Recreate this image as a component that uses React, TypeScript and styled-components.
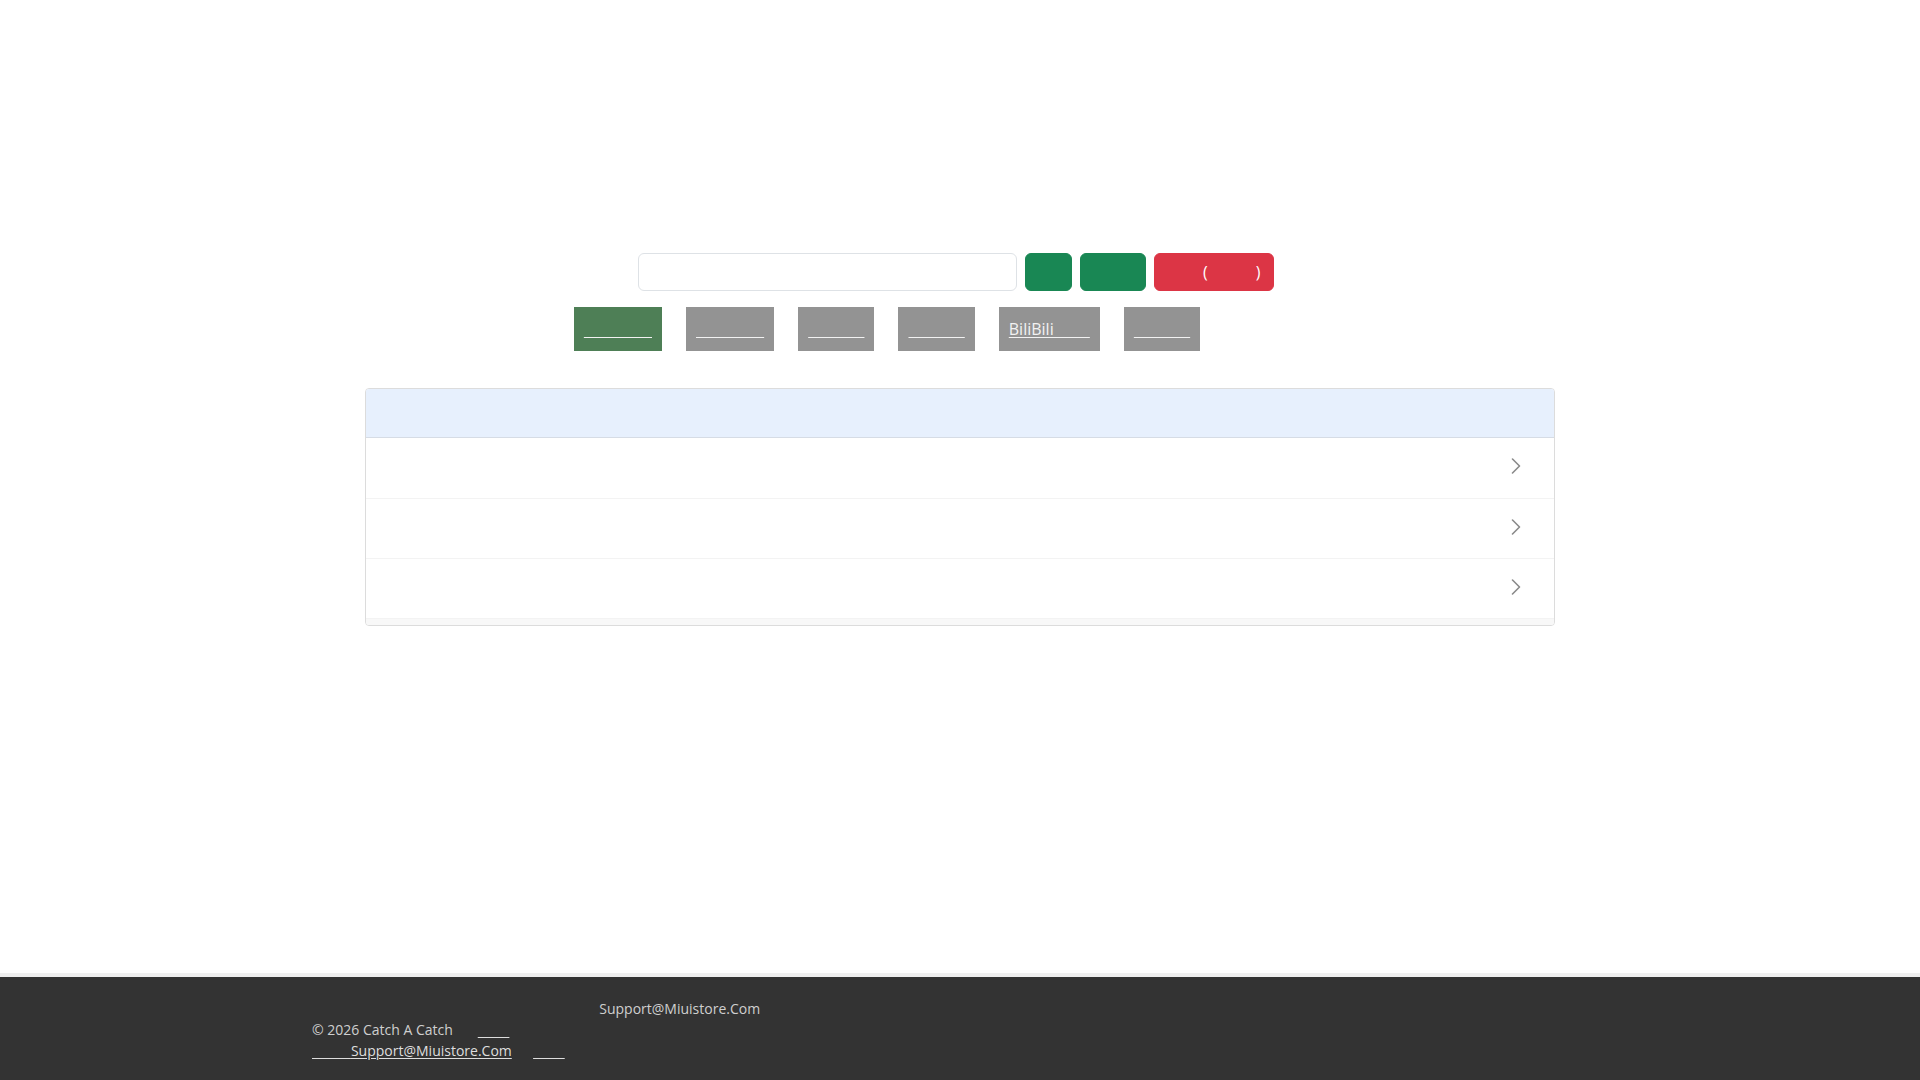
import React from 'react';
import styled, { createGlobalStyle } from 'styled-components';

const GlobalStyle = createGlobalStyle`
  html, body { margin: 0; padding: 0; }
  * { box-sizing: border-box; }
  body {
    font-family: "Open Sans", "Noto Sans CJK SC", sans-serif;
    font-size: 16px;
    line-height: 1.5;
    color: #212529;
    background: #ffffff;
  }
`;

/* The original labels are CJK text that rendered without glyphs: keep their advance as spaces */
const blank = (px: number, fs: number): string => {
  const em = Math.floor(px / fs);
  const rest = px - em * fs;
  const sp = Math.round(rest / (fs * 0.26));
  return '\u2003'.repeat(em) + ' '.repeat(sp);
};

const Page = styled.div`
  min-height: 100vh;
  display: flex;
  flex-direction: column;
`;

const Main = styled.main`
  flex: 1;
  padding-top: 253px;
  padding-bottom: 40px;
`;

const SearchRow = styled.form`
  display: flex;
  justify-content: center;
  gap: 8px;
  padding-right: 8px;
  margin: 0;
`;

const SearchInput = styled.input`
  width: 379px;
  height: 38px;
  border: 1px solid #dee2e6;
  border-radius: 6px;
  padding: 6px 12px;
  font-family: inherit;
  font-size: 16px;
  outline: none;
`;

const ActionButton = styled.button<{ $variant: 'success' | 'danger' }>`
  height: 38px;
  padding: 6px 12px;
  border-radius: 6px;
  border: 1px solid ${(p) => (p.$variant === 'success' ? '#198754' : '#dc3545')};
  background: ${(p) => (p.$variant === 'success' ? '#198754' : '#dc3545')};
  color: #ffffff;
  font-family: inherit;
  font-size: 16px;
  line-height: 24px;
  white-space: pre;
  cursor: pointer;
`;

const TabRow = styled.nav`
  display: flex;
  justify-content: center;
  gap: 24px;
  margin-top: 16px;
  padding-right: 146px;
`;

const Tab = styled.a<{ $active?: boolean }>`
  display: block;
  padding: 10px 10px;
  background: ${(p) => (p.$active ? '#4e7f56' : '#939393')};
  color: #f2f2f2;
  font-size: 16px;
  line-height: 24px;
  text-decoration: underline;
  text-underline-offset: 2px;
  white-space: pre;
  cursor: pointer;
`;

const Panel = styled.section`
  width: 1190px;
  margin: 37px auto 0;
  border: 1px solid #dcdcdc;
  border-radius: 4px;
  overflow: hidden;
  background: #ffffff;
`;

const PanelHeader = styled.header`
  height: 49px;
  background: #e7f0fd;
  border-bottom: 1px solid #d6dce5;
`;

const Row = styled.div`
  height: 60px;
  display: flex;
  align-items: center;
  justify-content: flex-end;
  padding: 0 33px 4px 0;
  border-bottom: 1px solid #f3f3f3;

  &:first-of-type {
    height: 61px;
    padding-bottom: 5px;
  }
`;

const PanelFoot = styled.footer`
  height: 6px;
  background: #f8f8f8;
`;

const Chevron = () => (
  <svg width="10" height="16" viewBox="0 0 10 16" fill="none">
    <path d="M1.5 1 L8.5 8 L1.5 15" stroke="#8a8a8a" strokeWidth="1.6" strokeLinecap="round" strokeLinejoin="round" />
  </svg>
);

const Footer = styled.footer`
  border-top: 4px solid #efefef;
  background: #333333;
  color: #cfcfcf;
  font-size: 14px;
  line-height: 21px;
  padding: 21px 0 19px;
`;

const FooterInner = styled.div`
  max-width: 1320px;
  margin: 0 auto;
  padding: 0 12px;
`;

const FooterLine = styled.div`
  white-space: pre;
`;

const FooterLink = styled.a`
  color: #dedede;
  text-decoration: underline;
  text-underline-offset: 2px;
`;

const tabs: { label: string; active?: boolean }[] = [
  { label: blank(67, 16), active: true },
  { label: blank(67, 16) },
  { label: blank(58, 16) },
  { label: blank(58, 16) },
  { label: 'BiliBili' + blank(38, 16) },
  { label: blank(58, 16) },
];

export default function App() {
  return (
    <>
      <GlobalStyle />
      <Page>
        <Main>
          <SearchRow onSubmit={(e) => e.preventDefault()}>
            <SearchInput type="text" />
            <ActionButton $variant="success" type="submit">{blank(19, 16)}</ActionButton>
            <ActionButton $variant="success" type="button">{blank(39, 16)}</ActionButton>
            <ActionButton $variant="danger" type="button">
              {blank(36, 16)}({blank(50, 16)})
            </ActionButton>
          </SearchRow>

          <TabRow>
            {tabs.map((t, i) => (
              <Tab key={i} $active={t.active}>
                {t.label}
              </Tab>
            ))}
          </TabRow>

          <Panel>
            <PanelHeader />
            {[0, 1, 2].map((i) => (
              <Row key={i}>
                <Chevron />
              </Row>
            ))}
            <PanelFoot />
          </Panel>
        </Main>

        <Footer>
          <FooterInner>
            <FooterLine>
              {blank(286, 14)}Support@Miuistore.Com
            </FooterLine>
            <FooterLine>
              © 2026 Catch A Catch{blank(25, 14)}
              <FooterLink>{blank(33, 14)}</FooterLink>
            </FooterLine>
            <FooterLine>
              <FooterLink>{blank(38, 14)}Support@Miuistore.Com</FooterLink>
              {blank(22, 14)}
              <FooterLink>{blank(33, 14)}</FooterLink>
            </FooterLine>
          </FooterInner>
        </Footer>
      </Page>
    </>
  );
}
